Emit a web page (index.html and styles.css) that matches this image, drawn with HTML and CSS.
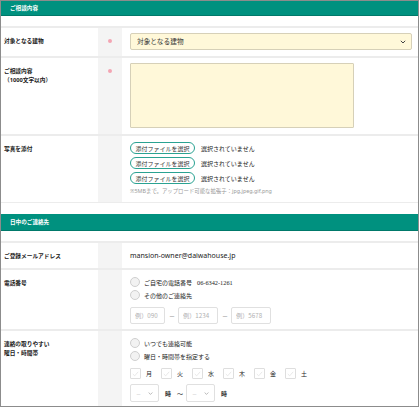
FILE: index.html
```html
<!DOCTYPE html>
<html lang="ja">
<head>
    <meta charset="UTF-8">
    <meta name="viewport" content="width=device-width, initial-scale=1.0">
    <title>お問い合わせフォーム</title>
    <link rel="stylesheet" href="styles.css">
</head>
<body>
    <div class="page">
        <!-- ご相談内容 -->
        <section class="section">
            <h2 class="section-head">ご相談内容</h2>
            <div class="section-body">
                <div class="row">
                    <div class="row-label">対象となる建物</div>
                    <div class="row-mark"><span class="dot"></span></div>
                    <div class="row-field">
                        <div class="select-wrap">
                            <select class="select">
                                <option>対象となる建物</option>
                            </select>
                            <svg class="chevron" width="6" height="4" viewBox="0 0 6 4"><path d="M0.8 0.8 L3 3 L5.2 0.8" fill="none" stroke="#444" stroke-width="1"/></svg>
                        </div>
                    </div>
                </div>
                <div class="row">
                    <div class="row-label">ご相談内容<br>（1000文字以内）</div>
                    <div class="row-mark"><span class="dot"></span></div>
                    <div class="row-field">
                        <textarea class="textarea"></textarea>
                    </div>
                </div>
                <div class="row">
                    <div class="row-label">写真を添付</div>
                    <div class="row-mark"></div>
                    <div class="row-field">
                        <div class="file-line">
                            <label class="file-btn"><input type="file" class="file-input">添付ファイルを選択</label>
                            <span class="file-name">選択されていません</span>
                        </div>
                        <div class="file-line">
                            <label class="file-btn"><input type="file" class="file-input">添付ファイルを選択</label>
                            <span class="file-name">選択されていません</span>
                        </div>
                        <div class="file-line">
                            <label class="file-btn"><input type="file" class="file-input">添付ファイルを選択</label>
                            <span class="file-name">選択されていません</span>
                        </div>
                        <p class="note">※5MBまで。アップロード可能な拡張子：jpg,jpeg,gif,png</p>
                    </div>
                </div>
            </div>
        </section>

        <!-- 日中のご連絡先 -->
        <section class="section">
            <h2 class="section-head">日中のご連絡先</h2>
            <div class="section-body">
                <div class="row">
                    <div class="row-label">ご登録メールアドレス</div>
                    <div class="row-mark"></div>
                    <div class="row-field row-field--text">mansion-owner@daiwahouse.jp</div>
                </div>
                <div class="row">
                    <div class="row-label">電話番号</div>
                    <div class="row-mark"></div>
                    <div class="row-field row-field--tel">
                        <label class="radio"><span class="radio-mark"></span>ご自宅の電話番号<span class="tel">06-6342-1261</span></label>
                        <label class="radio"><span class="radio-mark"></span>その他のご連絡先</label>
                        <div class="tel-inputs">
                            <input type="text" class="text-input text-input--short" placeholder="例）090">
                            <span class="dash">－</span>
                            <input type="text" class="text-input" placeholder="例）1234">
                            <span class="dash">－</span>
                            <input type="text" class="text-input" placeholder="例）5678">
                        </div>
                    </div>
                </div>
                <div class="row">
                    <div class="row-label">連絡の取りやすい<br>曜日・時間帯</div>
                    <div class="row-mark"></div>
                    <div class="row-field row-field--tel">
                        <label class="radio"><span class="radio-mark"></span>いつでも連絡可能</label>
                        <label class="radio"><span class="radio-mark"></span>曜日・時間帯を指定する</label>
                        <div class="days">
                            <label class="day"><span class="check"><svg width="7" height="6" viewBox="0 0 7 6"><path d="M0.8 3 L2.7 4.8 L6.2 0.8" fill="none" stroke="#e2e2e2" stroke-width="0.8"/></svg></span>月</label>
                            <label class="day"><span class="check"><svg width="7" height="6" viewBox="0 0 7 6"><path d="M0.8 3 L2.7 4.8 L6.2 0.8" fill="none" stroke="#e2e2e2" stroke-width="0.8"/></svg></span>火</label>
                            <label class="day"><span class="check"><svg width="7" height="6" viewBox="0 0 7 6"><path d="M0.8 3 L2.7 4.8 L6.2 0.8" fill="none" stroke="#e2e2e2" stroke-width="0.8"/></svg></span>水</label>
                            <label class="day"><span class="check"><svg width="7" height="6" viewBox="0 0 7 6"><path d="M0.8 3 L2.7 4.8 L6.2 0.8" fill="none" stroke="#e2e2e2" stroke-width="0.8"/></svg></span>木</label>
                            <label class="day"><span class="check"><svg width="7" height="6" viewBox="0 0 7 6"><path d="M0.8 3 L2.7 4.8 L6.2 0.8" fill="none" stroke="#e2e2e2" stroke-width="0.8"/></svg></span>金</label>
                            <label class="day"><span class="check"><svg width="7" height="6" viewBox="0 0 7 6"><path d="M0.8 3 L2.7 4.8 L6.2 0.8" fill="none" stroke="#e2e2e2" stroke-width="0.8"/></svg></span>土</label>
                        </div>
                        <div class="hours">
                            <div class="mini-select">
                                <span class="mini-value">－</span>
                                <svg width="5" height="3" viewBox="0 0 5 3"><path d="M0.6 0.5 L2.5 2.4 L4.4 0.5" fill="none" stroke="#aaa" stroke-width="0.8"/></svg>
                            </div>
                            <span class="unit">時</span>
                            <span class="tilde">〜</span>
                            <div class="mini-select">
                                <span class="mini-value">－</span>
                                <svg width="5" height="3" viewBox="0 0 5 3"><path d="M0.6 0.5 L2.5 2.4 L4.4 0.5" fill="none" stroke="#aaa" stroke-width="0.8"/></svg>
                            </div>
                            <span class="unit">時</span>
                        </div>
                    </div>
                </div>
            </div>
        </section>
    </div>
</body>
</html>
```

FILE: styles.css
```css
/* Form styles */

body {
    margin: 0;
    font-family: "Noto Sans", "Noto Sans CJK JP", sans-serif;
    color: #333;
    background: #fff;
}

.page {
    width: 419px;
    height: 407px;
    box-sizing: border-box;
    border: 1px solid #8c8c8c;
    overflow: hidden;
}

.section-head {
    margin: 0;
    height: 17px;
    box-sizing: border-box;
    padding-left: 9px;
    display: flex;
    align-items: center;
    background-color: #00917f;
    border-bottom: 1px solid #00796a;
    color: #fff;
    font-size: 5.6px;
    font-weight: bold;
}

.section:first-child .section-head {
    height: 15px;
}

.section-body {
    margin-top: 10px;
    margin-bottom: 11px;
    border-bottom: 1px solid #ececec;
}

.row {
    display: grid;
    grid-template-columns: 97px 24px 1fr;
    border-top: 2px solid #ececec;
}

.row-label {
    padding: 9px 0 0 3px;
    font-size: 5.7px;
    line-height: 8.5px;
    font-weight: bold;
    color: #222;
}

.row-mark {
    background-color: #f4f4f4;
    display: flex;
    justify-content: center;
    align-items: flex-start;
}

.dot {
    width: 4px;
    height: 4px;
    margin-top: 11px;
    border-radius: 50%;
    background-color: #f3a5b3;
}

.row-field {
    padding: 5px 6px 6px 8px;
    font-size: 6px;
}

.row-field--text {
    padding: 8px 8px 7px;
    font-size: 7px;
    line-height: 10px;
    color: #222;
}

.row-field--tel {
    padding-top: 7px;
    padding-bottom: 5px;
}

/* select + textarea */

.select-wrap {
    position: relative;
}

.select {
    display: block;
    width: 100%;
    height: 17px;
    padding: 0 6px;
    appearance: none;
    background-color: #fff8d9;
    border: 1px solid #d6d0b8;
    border-radius: 2px;
    font-family: inherit;
    font-size: 6.7px;
    color: #333;
}

.chevron {
    position: absolute;
    right: 6px;
    top: 7px;
}

.textarea {
    display: block;
    width: 224px;
    height: 65px;
    box-sizing: border-box;
    margin: 0;
    background-color: #fff8d9;
    border: 1px solid #d6d0b8;
    border-radius: 1px;
    resize: none;
}

/* file inputs */

.file-line {
    display: flex;
    align-items: center;
    height: 12px;
    margin-bottom: 3px;
}

.file-line:first-child {
    margin-top: 1px;
}

.file-btn {
    width: 65px;
    height: 12px;
    box-sizing: border-box;
    display: flex;
    align-items: center;
    justify-content: center;
    border: 1px solid #2aa292;
    border-radius: 7px;
    font-size: 6px;
    color: #333;
}

.file-input {
    display: none;
}

.file-name {
    margin-left: 6px;
    font-size: 6px;
    color: #222;
}

.note {
    margin: 2px 0 0;
    font-size: 5.4px;
    line-height: 9px;
    color: #999;
}

/* radios */

.radio {
    display: flex;
    align-items: center;
    height: 10px;
    margin-bottom: 3px;
    font-size: 6px;
    color: #222;
}

.radio-mark {
    width: 8px;
    height: 8px;
    margin-right: 4px;
    border: 1px solid #cfcfcf;
    border-radius: 50%;
    background-color: #f2f2f2;
}

.tel {
    margin-left: 5px;
    font-family: "Liberation Serif", serif;
    font-size: 6.3px;
}

.tel-inputs {
    display: flex;
    align-items: center;
    margin-top: 7px;
}

.text-input {
    width: 40px;
    height: 17px;
    box-sizing: border-box;
    padding: 0 4px;
    border: 1px solid #e0e0e0;
    border-radius: 2px;
    font-family: "Noto Sans CJK JP", sans-serif;
    font-size: 6.2px;
}

.text-input--short {
    width: 35px;
}

.text-input::placeholder {
    color: #b0b0b0;
    opacity: 1;
}

.dash {
    width: 5px;
    margin: 0 4px;
    font-size: 6px;
    color: #777;
    text-align: center;
}

/* days + hours */

.days {
    display: flex;
    margin-top: 7px;
}

.day {
    display: flex;
    align-items: center;
    width: 31px;
    font-size: 6px;
    color: #222;
}

.check {
    width: 11px;
    height: 11px;
    box-sizing: border-box;
    margin-right: 5px;
    display: flex;
    align-items: center;
    justify-content: center;
    border: 1px solid #dedede;
    border-radius: 1px;
}

.hours {
    display: flex;
    align-items: center;
    margin-top: 5px;
}

.mini-select {
    width: 29px;
    height: 18px;
    box-sizing: border-box;
    padding: 0 5px;
    display: flex;
    align-items: center;
    justify-content: space-between;
    border: 1px solid #e0e0e0;
    border-radius: 2px;
}

.mini-value {
    font-size: 5px;
    color: #bbb;
}

.unit {
    margin: 0 6px;
    font-size: 6px;
    font-weight: bold;
}

.tilde {
    margin-right: 3px;
    font-size: 6px;
}
```
